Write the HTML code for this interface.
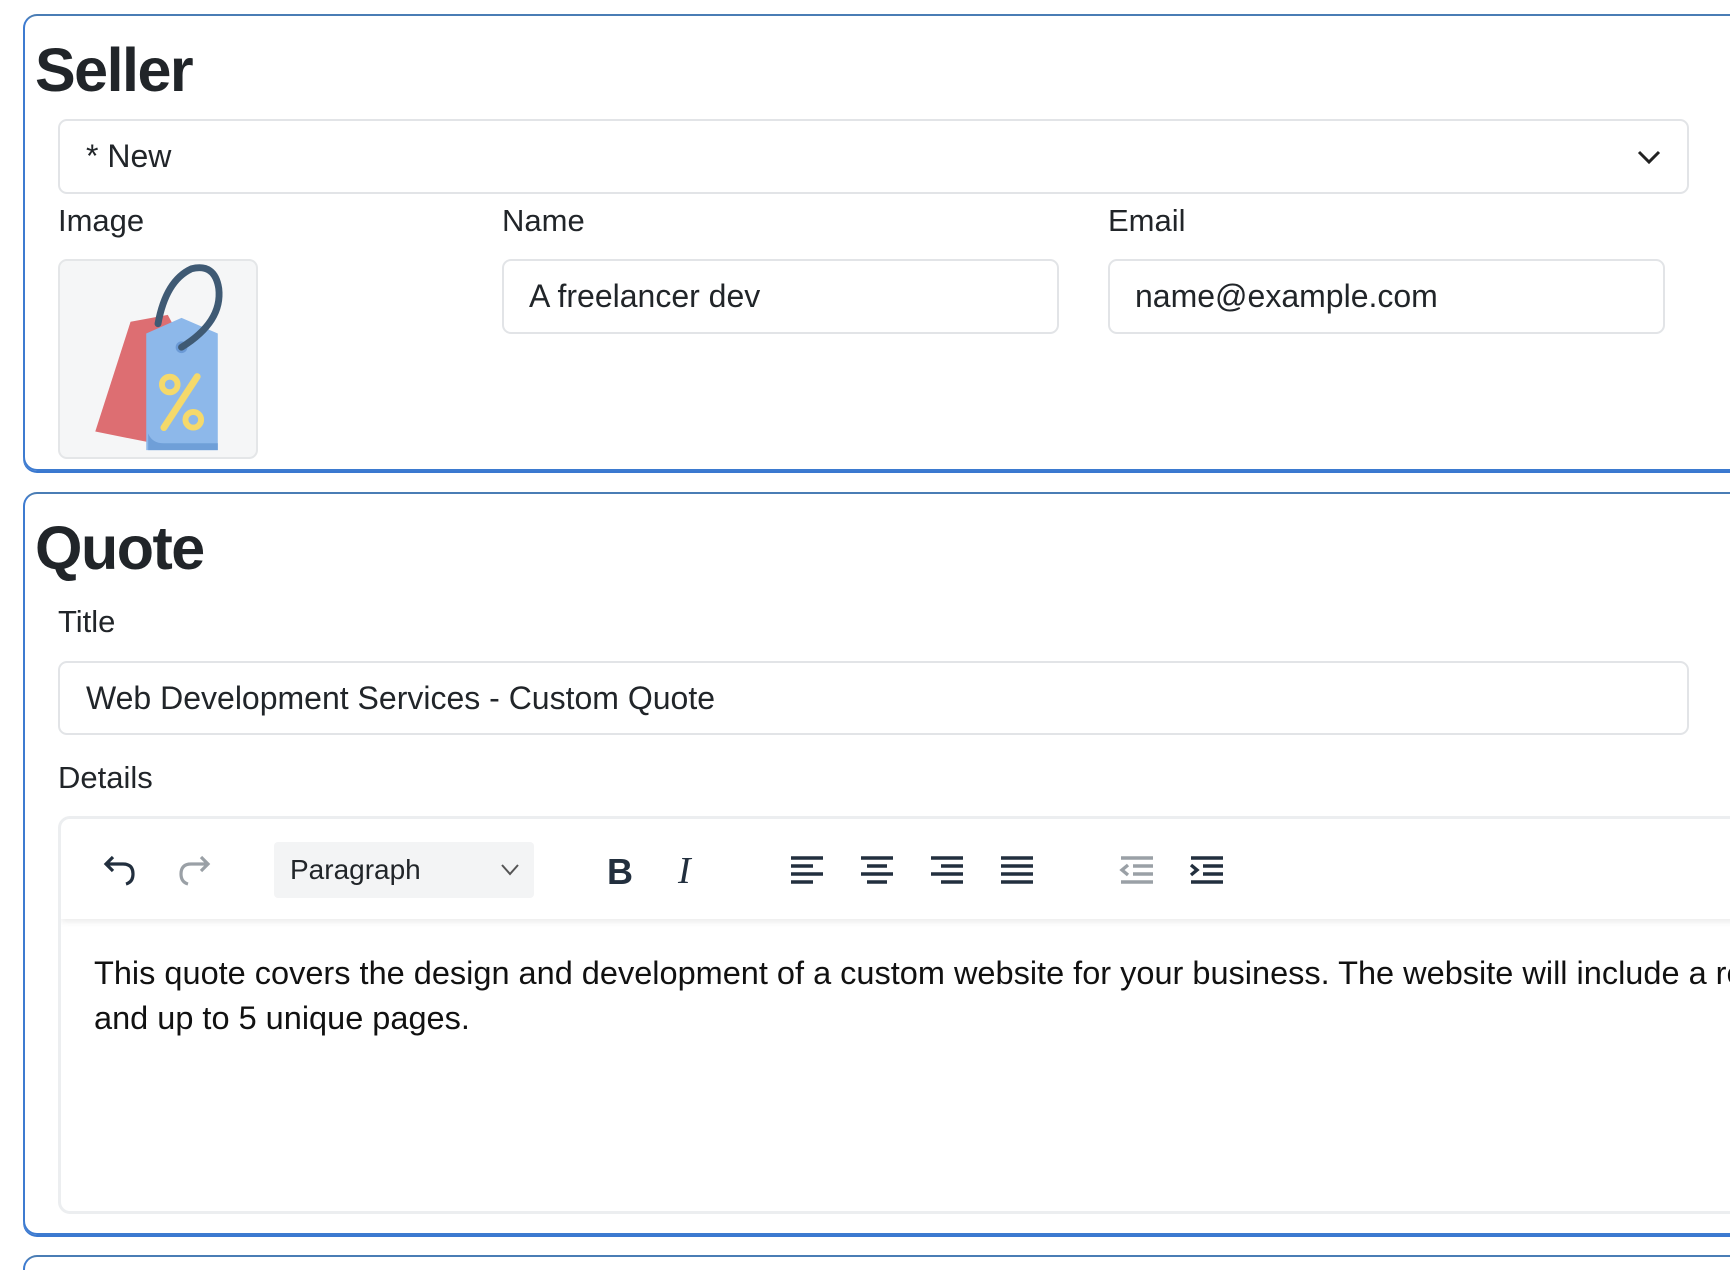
<!DOCTYPE html>
<html><head><meta charset="utf-8"><style>
*{box-sizing:border-box;margin:0;padding:0}
html,body{width:1730px;height:1270px;overflow:hidden}
body{background:#fff;font-family:"Liberation Sans",Arial,sans-serif;color:#212529;position:relative}
.card{position:absolute;left:23px;width:1760px;border:2px solid #3d7bd0;border-top-color:#4a7db5;border-radius:14px;box-shadow:0 2px 0 #3a78d0}
.abs{position:absolute}
h1{position:absolute;font-weight:700;font-size:61px;letter-spacing:-1.5px;line-height:1}
.lbl{position:absolute;font-size:31px;line-height:1}
.inp{position:absolute;border:2px solid #e2e4e7;border-radius:9px;background:#fff;font-size:32px;display:flex;align-items:center;padding-left:24px}
</style></head><body>
<div class="card" style="top:14px;height:457px"></div>
<h1 style="left:35px;top:40px">Seller</h1>
<div class="inp" style="left:58px;top:119px;width:1631px;height:75px;padding-left:26px">* New
<svg class="abs" style="left:1577px;top:28px" width="24" height="16" viewBox="0 0 24 16"><path d="M2 3l10 10 10-10" fill="none" stroke="#222" stroke-width="3"/></svg></div>
<div class="lbl" style="left:58px;top:205px">Image</div>
<div class="lbl" style="left:502px;top:205px">Name</div>
<div class="lbl" style="left:1108px;top:205px">Email</div>
<div class="abs" style="left:58px;top:259px;width:200px;height:200px;background:#f5f6f7;border:2px solid #e4e6e8;border-radius:9px">
<svg width="196" height="196" viewBox="0 0 200 200">
<path d="M72 62 L110 55 L118 70 L96 186 L36 174 Z" fill="#dd6e72"/>
<path d="M88 74 L124 58 L161 74 L161 193 L88 193 Z" fill="#8db8ea"/>
<path d="M90 193 L90 176 Q94 186 106 186 L161 186 L161 193 Z" fill="#6f9fd8"/>
<circle cx="124" cy="88" r="6" fill="#6b9ad6"/>
<path d="M124 88 Q166 62 162 28 Q158 2 134 8 Q108 20 100 64" fill="none" stroke="#3f5a74" stroke-width="7" stroke-linecap="round"/>
<circle cx="112" cy="126" r="8" fill="none" stroke="#f5d96b" stroke-width="6"/>
<circle cx="136" cy="162" r="8" fill="none" stroke="#f5d96b" stroke-width="6"/>
<path d="M140 118 L106 170" stroke="#f5d96b" stroke-width="7" stroke-linecap="round"/>
</svg></div>
<div class="inp" style="left:502px;top:259px;width:557px;height:75px;padding-left:25px">A freelancer dev</div>
<div class="inp" style="left:1108px;top:259px;width:557px;height:75px;padding-left:25px">name@example.com</div>

<div class="card" style="top:492px;height:743px"></div>
<h1 style="left:35px;top:518px">Quote</h1>
<div class="lbl" style="left:58px;top:606px">Title</div>
<div class="inp" style="left:58px;top:661px;width:1631px;height:74px;padding-left:26px">Web Development Services - Custom Quote</div>
<div class="lbl" style="left:58px;top:762px">Details</div>
<div class="abs" style="left:58px;top:816px;width:1720px;height:398px;border:3px solid #eceef0;border-radius:12px;overflow:hidden">
<div class="abs" style="left:0;top:0;width:100%;height:100px;box-shadow:0 3px 6px rgba(0,0,0,.08);background:#fff"></div>
<svg class="abs" style="left:42px;top:34px" width="36" height="34" viewBox="0 0 36 34"><path d="M10 4 L3 11 L10 18 M3 11 H20 Q30 11 30 21 Q30 29 23 31" fill="none" stroke="#222f3e" stroke-width="3.2"/></svg>
<svg class="abs" style="left:114px;top:34px" width="36" height="34" viewBox="0 0 36 34"><path d="M26 4 L33 11 L26 18 M33 11 H16 Q6 11 6 21 Q6 29 13 31" fill="none" stroke="#9aa0a6" stroke-width="3.2"/></svg>
<div class="abs" style="left:213px;top:23px;width:260px;height:56px;background:#f3f4f5;border-radius:4px;font-size:28px;line-height:56px;padding-left:16px">Paragraph
<svg class="abs" style="left:226px;top:21px" width="20" height="14" viewBox="0 0 20 14"><path d="M2 2l8 9 8-9" fill="none" stroke="#555" stroke-width="2"/></svg></div>
<div class="abs" style="left:546px;top:32px;font-size:36px;font-weight:700;color:#222f3e">B</div>
<div class="abs" style="left:617px;top:30px;font-size:38px;font-style:italic;font-family:'Liberation Serif',serif;color:#222f3e">I</div>
<svg class="abs" style="left:728px;top:36px" width="320" height="30" viewBox="0 0 320 30" stroke="#222f3e" stroke-width="3.4">
<path d="M2 3h32M2 11h22M2 19h32M2 27h22"/>
<path d="M72 3h32M78 11h20M72 19h32M78 27h20"/>
<path d="M142 3h32M152 11h22M142 19h32M152 27h22"/>
<path d="M212 3h32M212 11h32M212 19h32M212 27h32"/>
</svg>
<svg class="abs" style="left:1058px;top:36px" width="120" height="30" viewBox="0 0 120 30" stroke-width="3.4">
<g stroke="#9aa0a6"><path d="M2 3h32M14 11h20M14 19h20M2 27h32"/><path d="M9 10l-6 5 6 5" fill="none"/></g>
<g stroke="#222f3e"><path d="M72 3h32M84 11h20M84 19h20M72 27h32"/><path d="M72 10l6 5-6 5" fill="none"/></g>
</svg>
<div class="abs" style="left:33px;top:132px;width:1800px;font-size:32.5px;line-height:45px;color:#111">This quote covers the design and development of a custom website for your business. The website will include a responsive<br>and up to 5 unique pages.</div>
</div>
<div class="card" style="top:1255px;height:40px"></div>
</body></html>
